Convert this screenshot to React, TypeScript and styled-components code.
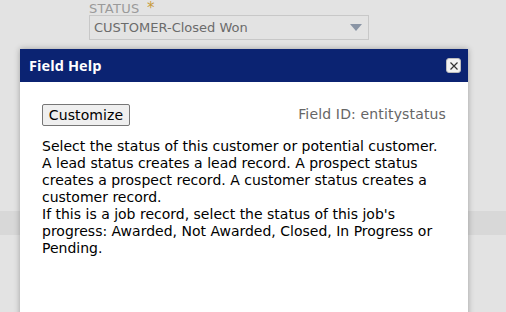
import React from 'react';
import styled, { createGlobalStyle } from 'styled-components';

const GlobalStyle = createGlobalStyle`
  html, body {
    margin: 0;
    padding: 0;
    background: #e3e3e3;
    font-family: "DejaVu Sans", Verdana, sans-serif;
  }
`;

const App = () => {
  return (
    <Page>
      <GlobalStyle />
      <FieldBlock>
        <Label>
          STATUS <Req>*</Req>
        </Label>
        <Select>
          <span>CUSTOMER-Closed Won</span>
          <Arrow />
        </Select>
      </FieldBlock>
      <Band />
      <Dialog>
        <Header>
          <Title>Field Help</Title>
          <CloseButton aria-label="close">
            <svg width="10" height="10" viewBox="0 0 10 10">
              <path d="M1.5 1.5 L8.5 8.5 M8.5 1.5 L1.5 8.5" stroke="#333" strokeWidth="1.2" />
            </svg>
          </CloseButton>
        </Header>
        <Body>
          <TopRow>
            <Button>Customize</Button>
            <FieldId>Field ID: entitystatus</FieldId>
          </TopRow>
          <HelpText>
            Select the status of this customer or potential customer.
            <br />
            A lead status creates a lead record. A prospect status creates a prospect record. A customer status creates a customer record.
            <br />
            If this is a job record, select the status of this job's progress: Awarded, Not Awarded, Closed, In Progress or Pending.
          </HelpText>
        </Body>
      </Dialog>
    </Page>
  );
};

export default App;

const Page = styled.div`
  position: relative;
  width: 506px;
  height: 312px;
  overflow: hidden;
  background: #e3e3e3;
`;

const FieldBlock = styled.div`
  padding: 2px 0 0 89px;
  display: flex;
  flex-direction: column;
  gap: 0;
`;

const Label = styled.div`
  font-size: 13px;
  line-height: 13px;
  letter-spacing: 0.3px;
  color: #9a9a9a;
  height: 13px;
`;

const Req = styled.span`
  color: #c89b3c;
  font-size: 15px;
  margin-left: 3px;
`;

const Select = styled.div`
  box-sizing: border-box;
  width: 280px;
  height: 25px;
  border: 1px solid #c8c8c8;
  display: flex;
  align-items: center;
  justify-content: space-between;
  padding: 0 6px 0 4px;
  font-size: 13px;
  color: #6b6b6b;
`;

const Arrow = styled.div`
  width: 0;
  height: 0;
  border-left: 6px solid transparent;
  border-right: 6px solid transparent;
  border-top: 7px solid #8a95a5;
`;

const Band = styled.div`
  margin-top: 171px;
  height: 24px;
  background: #d8d8d8;
`;

const Dialog = styled.div`
  position: absolute;
  top: 49px;
  left: 20px;
  width: 448px;
  height: 280px;
  background: #ffffff;
  box-shadow: 0 0 6px rgba(0, 0, 0, 0.3);
  display: flex;
  flex-direction: column;
`;

const Header = styled.div`
  height: 33px;
  background: #0b2372;
  display: flex;
  align-items: center;
  justify-content: space-between;
  padding: 0 7px 0 9px;
`;

const Title = styled.div`
  color: #ffffff;
  font-family: "Open Sans", sans-serif;
  font-weight: 700;
  font-size: 14.5px;
  letter-spacing: 0.1px;
`;

const CloseButton = styled.div`
  box-sizing: border-box;
  width: 15px;
  height: 15px;
  background: #f2f2f2;
  border: 1px solid #bdbdbd;
  border-radius: 3px;
  display: flex;
  align-items: center;
  justify-content: center;
`;

const Body = styled.div`
  padding: 22px 20px 0 22px;
`;

const TopRow = styled.div`
  display: flex;
  justify-content: space-between;
  align-items: center;
  padding-right: 2px;
`;

const Button = styled.button`
  box-sizing: border-box;
  height: 22px;
  width: 88px;
  padding: 0;
  font-family: "DejaVu Sans", Verdana, sans-serif;
  font-size: 14px;
  letter-spacing: 0.1px;
  color: #000;
  background: #efefef;
  border: 1px solid #767676;
  border-radius: 2px;
`;

const FieldId = styled.div`
  font-size: 14px;
  letter-spacing: 0.15px;
  color: #666666;
  margin-top: -2px;
`;

const HelpText = styled.div`
  margin-top: 12px;
  font-size: 14px;
  letter-spacing: 0;
  line-height: 17px;
  color: #000;
`;
